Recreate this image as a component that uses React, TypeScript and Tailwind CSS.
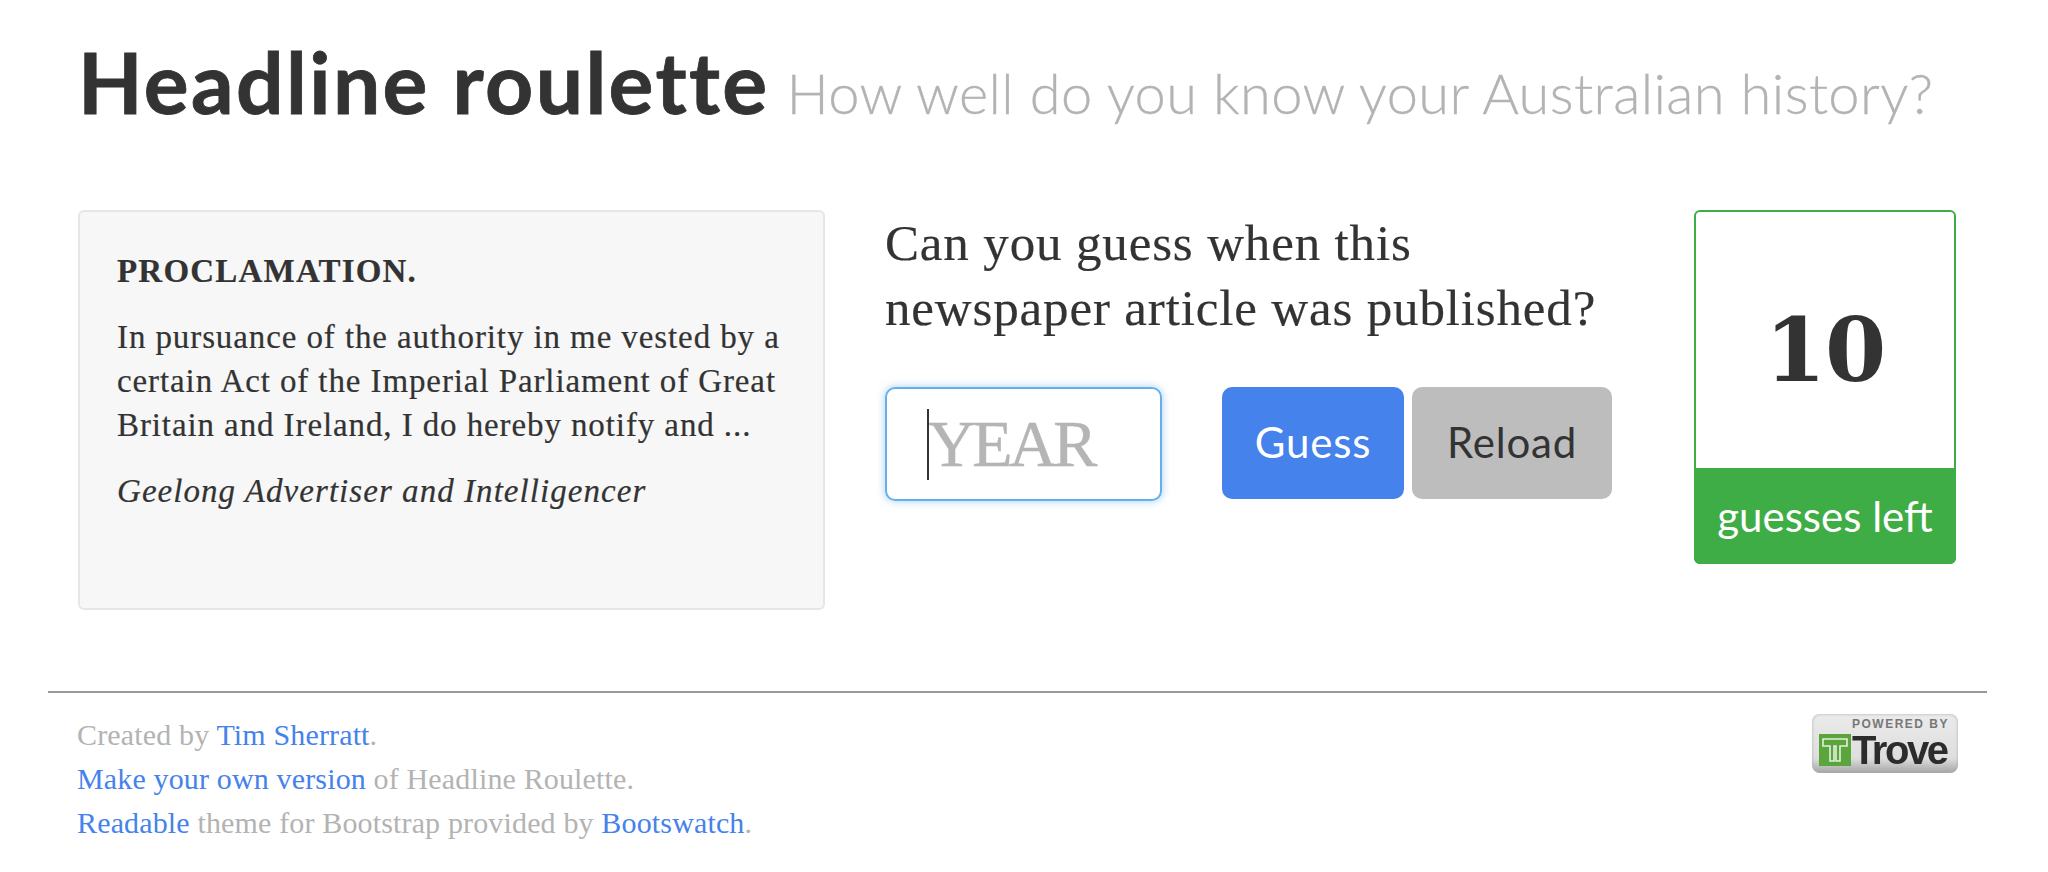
const serif = "font-['Liberation_Serif',serif]";

function TroveBadge() {
  return (
    <div className="w-[146px] h-[59px] rounded-[8px] bg-gradient-to-b from-[#ebebeb] via-[#dedede] via-75% to-[#a6a6a6] pl-[7px] pt-[4px] shadow-[inset_0_0_3px_#aaa] blur-[0.4px]">
      <div className="ml-[33px] h-[15px] font-['Liberation_Sans',sans-serif] text-[12px] leading-[13px] font-bold text-[#777] tracking-[1.5px] whitespace-nowrap">
        POWERED BY
      </div>
      <div className="flex items-center">
        <svg width="32" height="32" viewBox="0 0 32 32" className="shrink-0">
          <rect width="32" height="32" fill="#5aa63c" />
          <path d="M4 5h24v7h-7v15h-4V12h-2v15h-4V12H4z" fill="none" stroke="#e4f0dc" strokeWidth="1.6" />
        </svg>
        <span className="ml-[1px] font-['Liberation_Sans',sans-serif] text-[40px] leading-[34px] font-bold tracking-[-2.4px] text-[#2c2c2c]">
          Trove
        </span>
      </div>
    </div>
  );
}

export default function App() {
  return (
    <div className={`w-[2048px] h-[872px] overflow-hidden bg-white text-[#333] ${serif}`}>
      <div className="px-[78px] pt-[26px] flex items-baseline gap-[17px] h-[210px] font-['Lato',sans-serif]">
        <h1 className="text-[84px] leading-[112px] font-bold tracking-[2.35px] [-webkit-text-stroke:0.8px] text-[#333] whitespace-nowrap">Headline roulette</h1>
        <span className="text-[56px] font-light tracking-[0.4px] [-webkit-text-stroke:0.3px] text-[#b3b3b3] whitespace-nowrap">How well do you know your Australian history?</span>
      </div>

      <div className="flex pl-[78px] h-[481px]">
        <div className="w-[747px] h-[400px] rounded-[6px] border-2 border-[#e6e6e6] bg-[#f7f7f7] pl-[37px] pt-[37px] text-[33px] leading-[44px] tracking-[0.9px] [-webkit-text-stroke:0.2px]">
          <p className="font-bold tracking-[1.2px]">PROCLAMATION.</p>
          <p className="mt-[22px]">
            In pursuance of the authority in me vested by a
            <br />
            certain Act of the Imperial Parliament of Great
            <br />
            Britain and Ireland, I do hereby notify and ...
          </p>
          <p className="mt-[22px] italic tracking-[1.05px]">Geelong Advertiser and Intelligencer</p>
        </div>

        <div className="w-[869px] pl-[60px]">
          <h2 className="text-[51px] leading-[65px] mt-[1px] tracking-[0.85px] whitespace-nowrap [-webkit-text-stroke:0.2px]">
            Can you guess when this
            <br />
            newspaper article was published?
          </h2>
          <div className="flex mt-[46px] font-['Lato',sans-serif]">
            <div className="relative">
              <input
                placeholder="YEAR"
                className={`w-[277px] h-[114px] rounded-[10px] border-2 border-[#66afe9] pl-[41px] text-[66px] tracking-[-3.5px] [-webkit-text-stroke:0.5px_#b5b5b5] outline-none shadow-[0_0_8px_rgba(102,175,233,0.6)] placeholder:text-[#b5b5b5] ${serif}`}
              />
              <span className="absolute left-[42px] top-[22px] w-[2px] h-[71px] bg-[#333]" />
            </div>
            <button className="w-[182px] h-[112px] ml-[60px] pb-[2px] rounded-[10px] bg-[#4582ec] text-white text-[42px] tracking-[0.8px]">Guess</button>
            <button className="w-[200px] h-[112px] ml-[8px] pb-[2px] rounded-[10px] bg-[#bdbdbd] text-[#333] text-[42px] tracking-[0.8px]">Reload</button>
          </div>
        </div>

        <div className="w-[262px] h-[354px] rounded-[6px] border-2 border-[#3fad46] flex flex-col">
          <div className="flex-1 flex items-center justify-center pt-[20px] font-['DejaVu_Serif',serif] font-bold text-[88px] tracking-[-1px]">10</div>
          <div className="h-[96px] mb-[-2px] mx-[-2px] rounded-b-[6px] bg-[#3fad46] text-white text-[42px] font-['Lato',sans-serif] flex items-center justify-center">
            guesses left
          </div>
        </div>
      </div>

      <div className="ml-[48px] w-[1939px] border-t-2 border-[#999] pl-[29px] pr-[29px] pt-[20px] flex justify-between">
        <div className="text-[30px] leading-[44px] text-[#b3b3b3] tracking-[0.15px]">
          <p>
            Created by <a className="text-[#4582ec]">Tim Sherratt</a>.
          </p>
          <p>
            <a className="text-[#4582ec]">Make your own version</a> of Headline Roulette.
          </p>
          <p>
            <a className="text-[#4582ec]">Readable</a> theme for Bootstrap provided by <a className="text-[#4582ec]">Bootswatch</a>.
          </p>
        </div>
        <div className="pt-[1px]">
          <TroveBadge />
        </div>
      </div>
    </div>
  );
}
